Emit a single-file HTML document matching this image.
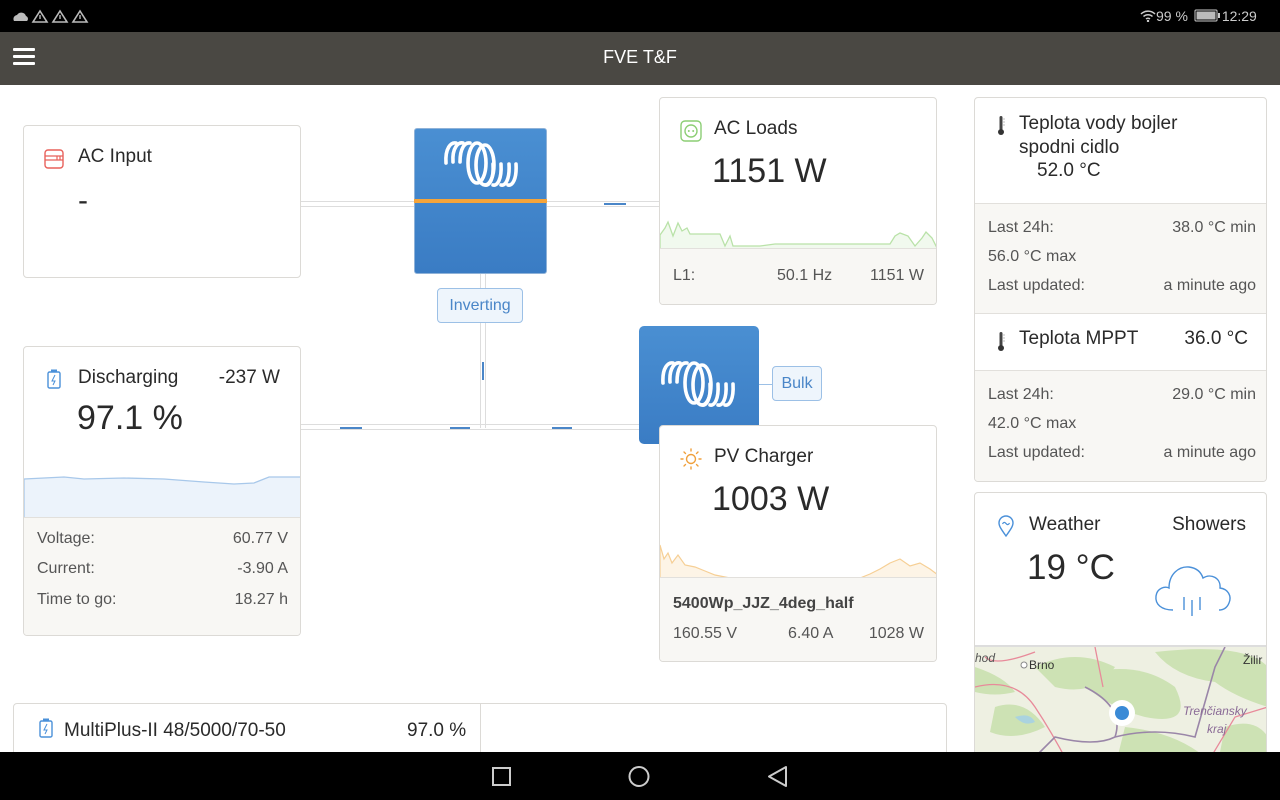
<!DOCTYPE html>
<html><head><meta charset="utf-8"><style>
*{box-sizing:border-box;margin:0;padding:0}
body{width:1280px;height:800px;overflow:hidden;background:#fff;font-family:"Liberation Sans",sans-serif;color:#2a2a2a;position:relative}
.abs{position:absolute}
.card{position:absolute;border:1px solid #dcdad6;border-radius:4px;background:#fff;overflow:hidden}
.foot{position:absolute;left:0;right:0;bottom:0;background:#f8f7f4;border-top:1px solid #e2e0dc;color:#555;font-size:16px}
.t{position:absolute;white-space:nowrap}
.line{position:absolute;background:#e0e0e0}
.vic{position:absolute;background:linear-gradient(#4a8fd2,#3a7cc4);border-radius:3px}
.lbl{position:absolute;border:1px solid #9cc0e6;background:#eef5fc;color:#4a86c8;border-radius:4px;font-size:16px;text-align:center}
</style></head><body>
<div class="abs" style="left:0;top:0;width:1280px;height:32px;background:#000"></div>
<svg class="abs" style="left:12px;top:9px" width="80" height="14"><path d="M2 12 a4 4 0 0 1 3-6 a5 5 0 0 1 9 1 a3 3 0 0 1 1 5z" fill="#bbb"/><g fill="none" stroke="#bbb" stroke-width="1.6"><path d="M28 2 L35 13 L21 13Z"/><path d="M48 2 L55 13 L41 13Z"/><path d="M68 2 L75 13 L61 13Z"/></g><g fill="#bbb"><rect x="27.3" y="6" width="1.4" height="4"/><rect x="47.3" y="6" width="1.4" height="4"/><rect x="67.3" y="6" width="1.4" height="4"/></g></svg>
<div class="t" style="left:1140px;top:8px;color:#ccc;font-size:14px">
<svg width="16" height="13" style="vertical-align:-1px"><path d="M1 5 a10 10 0 0 1 14 0 M3.5 7.5 a6.5 6.5 0 0 1 9 0 M6 10 a3 3 0 0 1 4 0" stroke="#ccc" stroke-width="1.5" fill="none"/><circle cx="8" cy="12" r="1.2" fill="#ccc"/></svg>99 %
<svg width="28" height="13" style="vertical-align:-1px;margin-left:2px"><rect x="1" y="1" width="22" height="11" rx="1" fill="none" stroke="#ccc"/><rect x="2.5" y="2.5" width="19" height="8" fill="#bbb"/><rect x="24" y="4" width="2" height="5" fill="#ccc"/></svg>12:29</div>
<div class="abs" style="left:0;top:32px;width:1280px;height:53px;background:#4a4843"></div>
<svg class="abs" style="left:13px;top:47px" width="22" height="18"><rect y="1" width="22" height="3" rx="1" fill="#fff"/><rect y="8" width="22" height="3" rx="1" fill="#fff"/><rect y="15" width="22" height="3" rx="1" fill="#fff"/></svg>
<div class="t" style="left:0;width:1280px;text-align:center;top:47px;color:#fff;font-size:18px">FVE T&amp;F</div>

<div class="line" style="left:300px;top:201px;width:360px;height:6px;background:none;border-top:1px solid #ddd;border-bottom:1px solid #ddd"></div>
<div class="line" style="left:300px;top:424px;width:340px;height:6px;background:none;border-top:1px solid #ddd;border-bottom:1px solid #ddd"></div>
<div class="line" style="left:480px;top:273px;width:6px;height:155px;background:none;border-left:1px solid #ddd;border-right:1px solid #ddd"></div>
<div class="abs" style="left:604px;top:203px;width:22px;height:2px;background:#4a86c8"></div>
<div class="abs" style="left:340px;top:427px;width:22px;height:2px;background:#4a86c8"></div>
<div class="abs" style="left:450px;top:427px;width:20px;height:2px;background:#4a86c8"></div>
<div class="abs" style="left:552px;top:427px;width:20px;height:2px;background:#4a86c8"></div>
<div class="abs" style="left:482px;top:362px;width:2px;height:18px;background:#4a86c8"></div>
<div class="abs" style="left:758px;top:384px;width:14px;height:1px;background:#9cc0e6"></div>

<div class="vic" style="left:414px;top:128px;width:133px;height:146px;border:1px solid #8fb2d8"></div>
<div class="abs" style="left:414px;top:199px;width:133px;height:4px;background:#f5a43a"></div>
<svg class="abs" style="left:443px;top:140px" width="76" height="48" viewBox="0 0 76 48"><g fill="none" stroke="#fff" stroke-width="3.6" stroke-linecap="round"><path d="M3 23 C2 8 8 2 13 3"/><path d="M10 22 C9 8 15 2 20 3"/><path d="M17 22 C17 8 22 2 27 3"/><ellipse cx="34" cy="23" rx="9" ry="20"/><ellipse cx="42" cy="25" rx="9" ry="20"/><path d="M50 24 C51 40 46 46 42 45"/><path d="M58 24 C59 40 54 46 50 45"/><path d="M66 24 C67 40 62 46 58 45"/><path d="M73 24 C74 40 69 46 65 45"/></g></svg>
<div class="lbl" style="left:437px;top:288px;width:86px;height:35px;line-height:33px">Inverting</div>

<div class="vic" style="left:639px;top:326px;width:120px;height:118px;border-radius:5px"></div>
<svg class="abs" style="left:660px;top:360px" width="76" height="48" viewBox="0 0 76 48"><g fill="none" stroke="#fff" stroke-width="3.6" stroke-linecap="round"><path d="M3 23 C2 8 8 2 13 3"/><path d="M10 22 C9 8 15 2 20 3"/><path d="M17 22 C17 8 22 2 27 3"/><ellipse cx="34" cy="23" rx="9" ry="20"/><ellipse cx="42" cy="25" rx="9" ry="20"/><path d="M50 24 C51 40 46 46 42 45"/><path d="M58 24 C59 40 54 46 50 45"/><path d="M66 24 C67 40 62 46 58 45"/><path d="M73 24 C74 40 69 46 65 45"/></g></svg>
<div class="lbl" style="left:772px;top:366px;width:50px;height:35px;line-height:33px">Bulk</div>

<div class="card" style="left:23px;top:125px;width:278px;height:153px">
<svg class="abs" style="left:20px;top:23px" width="20" height="20"><rect x="1" y="1" width="18" height="18" rx="3" fill="none" stroke="#e8605a" stroke-width="1.4"/><path d="M1 7 H19 M1 11 H19 M13 7 V11 M16 7 V11" stroke="#e8605a" stroke-width="1.2"/></svg>
<div class="t" style="left:54px;top:20px;font-size:19px">AC Input</div>
<div class="t" style="left:54px;top:58px;font-size:30px">-</div>
</div>

<div class="card" style="left:659px;top:97px;width:278px;height:208px">
<svg class="abs" style="left:20px;top:22px" width="22" height="22"><rect x="1" y="1" width="20" height="20" rx="4" fill="none" stroke="#8cce74" stroke-width="1.4"/><circle cx="11" cy="11" r="6" fill="none" stroke="#8cce74" stroke-width="1.4"/><circle cx="8.8" cy="11" r="1" fill="#8cce74"/><circle cx="13.2" cy="11" r="1" fill="#8cce74"/></svg>
<div class="t" style="left:54px;top:20px;font-size:19px">AC Loads</div>
<div class="t" style="left:52px;top:54px;font-size:34px">1151 W</div>
<svg class="abs" style="left:0;top:100px" width="278" height="52"><path d="M0 37 L5 30 L8 24 L13 38 L18 25 L22 33 L27 30 L30 36 L60 36 L65 48 L70 38 L73 48 L100 48 L115 46 L140 46 L230 46 L235 38 L240 35 L248 38 L255 48 L262 40 L266 34 L272 40 L278 52 L0 52Z" fill="#f1f9ee" stroke="#b9e2a8" stroke-width="1.3"/></svg>
<div class="foot" style="height:56px"><div class="t" style="left:13px;top:18px">L1:</div><div class="t" style="left:117px;top:18px">50.1 Hz</div><div class="t" style="right:12px;top:18px">1151 W</div></div>
</div>

<div class="card" style="left:23px;top:346px;width:278px;height:290px">
<svg class="abs" style="left:23px;top:22px" width="14" height="20"><rect x="1" y="3" width="12" height="16" rx="1.5" fill="none" stroke="#4a90d9" stroke-width="1.4"/><rect x="4" y="0.5" width="6" height="2.5" fill="#4a90d9"/><path d="M8 6 L5 12 H8 L6 16" fill="none" stroke="#4a90d9" stroke-width="1"/></svg>
<div class="t" style="left:54px;top:20px;font-size:19px">Discharging</div>
<div class="t" style="right:20px;top:20px;font-size:19px">-237 W</div>
<div class="t" style="left:53px;top:52px;font-size:34px">97.1 %</div>
<svg class="abs" style="left:0;top:125px" width="278" height="48"><path d="M0 7 L40 5 L60 7 L100 6 L140 7 L180 10 L210 12 L230 11 L245 5 L278 5 L278 48 L0 48Z" fill="#ecf3fb" stroke="#a8c8ea" stroke-width="1.3"/></svg>
<div class="foot" style="height:118px">
<div class="t" style="left:13px;top:12px">Voltage:</div><div class="t" style="right:12px;top:12px">60.77 V</div>
<div class="t" style="left:13px;top:42px">Current:</div><div class="t" style="right:12px;top:42px">-3.90 A</div>
<div class="t" style="left:13px;top:73px">Time to go:</div><div class="t" style="right:12px;top:73px">18.27 h</div></div>
</div>

<div class="card" style="left:659px;top:425px;width:278px;height:237px">
<svg class="abs" style="left:20px;top:22px" width="22" height="22"><circle cx="11" cy="11" r="4.5" fill="none" stroke="#f0a03c" stroke-width="1.4"/><g stroke="#f0a03c" stroke-width="1.4" stroke-linecap="round"><path d="M11 1V3M11 19V21M1 11H3M19 11H21M4 4L5.5 5.5M16.5 16.5L18 18M4 18L5.5 16.5M16.5 5.5L18 4"/></g></svg>
<div class="t" style="left:54px;top:20px;font-size:19px">PV Charger</div>
<div class="t" style="left:52px;top:54px;font-size:34px">1003 W</div>
<svg class="abs" style="left:0;top:115px" width="278" height="38"><path d="M0 4 L4 18 L8 12 L12 22 L18 14 L25 24 L35 26 L45 30 L55 34 L70 37 L200 37 L210 33 L220 28 L230 22 L240 18 L250 25 L260 22 L270 28 L278 34 L278 38 L0 38Z" fill="#fdf4e6" stroke="#f6cf95" stroke-width="1.2"/></svg>
<div class="foot" style="height:84px">
<div class="t" style="left:13px;top:17px;font-weight:bold;color:#444">5400Wp_JJZ_4deg_half</div>
<div class="t" style="left:13px;top:47px">160.55 V</div><div class="t" style="left:128px;top:47px">6.40 A</div><div class="t" style="right:12px;top:47px">1028 W</div></div>
</div>

<div class="card" style="left:974px;top:97px;width:293px;height:385px">
<svg class="abs" style="left:20px;top:17px" width="12" height="22"><rect x="4.5" y="1" width="3" height="14" rx="1.5" fill="#444"/><circle cx="6" cy="17" r="3" fill="#333"/><path d="M8 4H10M8 7H10M8 10H10" stroke="#aaa" stroke-width="0.8"/></svg>
<div class="t" style="left:44px;top:14px;font-size:19px;line-height:24px">Teplota vody bojler<br>spodni cidlo</div>
<div class="t" style="left:62px;top:62px;font-size:19px">52.0 °C</div>
<div class="abs" style="left:0;top:105px;width:293px;height:111px;background:#f8f7f4;border-top:1px solid #e2e0dc;border-bottom:1px solid #e2e0dc;color:#555;font-size:16px">
<div class="t" style="left:13px;top:15px">Last 24h:</div><div class="t" style="right:12px;top:15px">38.0 °C min</div>
<div class="t" style="left:13px;top:44px">56.0 °C max</div>
<div class="t" style="left:13px;top:73px">Last updated:</div><div class="t" style="right:12px;top:73px">a minute ago</div></div>
<svg class="abs" style="left:20px;top:233px" width="12" height="22"><rect x="4.5" y="1" width="3" height="14" rx="1.5" fill="#444"/><circle cx="6" cy="17" r="3" fill="#333"/><path d="M8 4H10M8 7H10M8 10H10" stroke="#aaa" stroke-width="0.8"/></svg>
<div class="t" style="left:44px;top:230px;font-size:19px">Teplota MPPT</div>
<div class="t" style="right:18px;top:230px;font-size:19px">36.0 °C</div>
<div class="abs" style="left:0;top:272px;width:293px;height:113px;background:#f8f7f4;border-top:1px solid #e2e0dc;color:#555;font-size:16px">
<div class="t" style="left:13px;top:15px">Last 24h:</div><div class="t" style="right:12px;top:15px">29.0 °C min</div>
<div class="t" style="left:13px;top:44px">42.0 °C max</div>
<div class="t" style="left:13px;top:73px">Last updated:</div><div class="t" style="right:12px;top:73px">a minute ago</div></div>
</div>

<div class="card" style="left:974px;top:492px;width:293px;height:280px">
<svg class="abs" style="left:22px;top:22px" width="18" height="22"><path d="M9 21 C4 14 2 11 2 8 A7 7 0 0 1 16 8 C16 11 14 14 9 21Z" fill="none" stroke="#4a90d9" stroke-width="1.4"/><path d="M5.5 9 Q7 6 9 8.5 Q11 11 12.5 8" fill="none" stroke="#4a90d9" stroke-width="1.2"/></svg>
<div class="t" style="left:54px;top:21px;font-size:19px">Weather</div>
<div class="t" style="right:20px;top:21px;font-size:19px">Showers</div>
<div class="t" style="left:52px;top:55px;font-size:35px">19 °C</div>
<svg class="abs" style="left:178px;top:67px" width="82" height="64"><path d="M20 50 C8 50 2 44 3 36 C4 28 12 26 16 28 C16 14 26 6 36 7 C44 8 48 12 50 18 C58 13 68 18 67 28 C75 29 79 36 76 43 C74 48 70 50 66 50" fill="none" stroke="#4a90d9" stroke-width="1.4"/><path d="M31 37V50M39 40V56M47 37V50" stroke="#4a90d9" stroke-width="1.4"/></svg>
<div class="abs" style="left:0;top:152px;width:293px;height:130px;background:#eef0e2;border-top:2px solid #ddd">
<svg width="293" height="130"><g fill="#cde2b4"><path d="M60 20 Q100 0 140 20 Q120 50 80 40Z"/><path d="M100 30 Q160 10 200 40 Q220 80 170 70 Q130 60 100 30Z"/><path d="M180 5 Q270 -5 293 20 L293 60 Q260 50 240 35 Q200 30 180 5Z"/><path d="M20 60 Q50 50 70 80 Q40 95 15 85Z"/><path d="M250 80 Q280 70 293 90 L293 130 L240 130Z"/><path d="M0 20 Q30 30 40 45 Q20 50 0 45Z"/><path d="M150 80 Q200 85 230 110 L180 130 L140 120Z"/></g><path d="M0 40 Q40 30 60 60 T100 130 M10 10 Q20 20 60 5 M120 0 L128 40 M230 120 L260 70 L293 60" stroke="#e88a9a" stroke-width="1.3" fill="none"/><path d="M110 40 Q150 60 140 90 Q120 100 80 90 L60 110 M140 90 Q180 80 220 90 L240 20 L250 0 M0 110 Q40 100 70 120" stroke="#9a86a8" stroke-width="1.6" fill="none"/><path d="M40 70 Q55 65 60 75 Q50 80 40 70Z" fill="#aad3df"/><circle cx="49" cy="18" r="3" fill="#fff" stroke="#888"/><text x="54" y="22" font-size="12" fill="#333" font-family="Liberation Sans">Brno</text><text x="0" y="15" font-size="12" fill="#555" font-family="Liberation Sans" font-style="italic">hod</text><text x="268" y="17" font-size="12" fill="#333" font-family="Liberation Sans">Žilir</text><text x="208" y="68" font-size="12" fill="#8a6a96" font-family="Liberation Sans" font-style="italic">Trenčiansky</text><text x="232" y="86" font-size="12" fill="#8a6a96" font-family="Liberation Sans" font-style="italic">kraj</text><circle cx="147" cy="66" r="13" fill="#fff"/><circle cx="147" cy="66" r="7" fill="#3a8ad6"/></svg></div>
</div>

<div class="card" style="left:13px;top:703px;width:934px;height:60px">
<div class="abs" style="left:466px;top:0;width:1px;height:60px;background:#dcdad6"></div>
<svg class="abs" style="left:25px;top:14px" width="14" height="20"><rect x="1" y="3" width="12" height="16" rx="1.5" fill="none" stroke="#4a90d9" stroke-width="1.4"/><rect x="4" y="0.5" width="6" height="2.5" fill="#4a90d9"/><path d="M8 6 L5 12 H8 L6 16" fill="none" stroke="#4a90d9" stroke-width="1"/></svg>
<div class="t" style="left:50px;top:16px;font-size:19px">MultiPlus-II 48/5000/70-50</div>
<div class="t" style="left:393px;top:16px;font-size:19px">97.0 %</div>
</div>

<div class="abs" style="left:0;top:752px;width:1280px;height:48px;background:#000"></div>
<svg class="abs" style="left:490px;top:764px" width="300" height="24"><rect x="3" y="4" width="17" height="17" fill="none" stroke="#ccc" stroke-width="2"/><circle cx="149" cy="12.5" r="9.5" fill="none" stroke="#ccc" stroke-width="2"/><path d="M296 3 L279 12.5 L296 22Z" fill="none" stroke="#ccc" stroke-width="2" stroke-linejoin="round"/></svg>
</body></html>
